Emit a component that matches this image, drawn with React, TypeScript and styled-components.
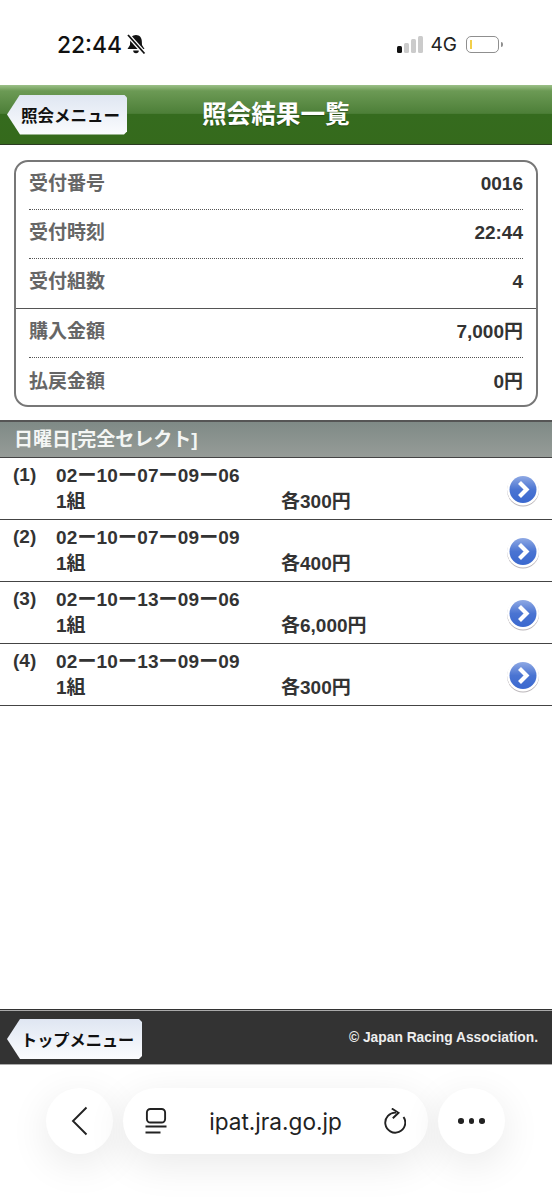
import styled, { createGlobalStyle } from 'styled-components';

const GlobalStyle = createGlobalStyle`
  html, body {
    margin: 0;
    padding: 0;
    background: #fff;
  }
  * {
    box-sizing: border-box;
  }
`;

const summary = [
  { label: '受付番号', value: '0016', height: 48 },
  { label: '受付時刻', value: '22:44', height: 49 },
  { label: '受付組数', value: '4', height: 50, divider: 'solid' },
  { label: '購入金額', value: '7,000円', height: 49 },
  { label: '払戻金額', value: '0円', height: 47, divider: 'none' },
];

const bets = [
  { no: '(1)', numbers: '02ー10ー07ー09ー06', price: '各300円' },
  { no: '(2)', numbers: '02ー10ー07ー09ー09', price: '各400円' },
  { no: '(3)', numbers: '02ー10ー13ー09ー06', price: '各6,000円' },
  { no: '(4)', numbers: '02ー10ー13ー09ー09', price: '各300円' },
];

const ArrowIcon = () => (
  <ArrowSvg viewBox="0 0 34 34">
    <defs>
      <linearGradient id="arrowBlue" x1="0" y1="0" x2="0" y2="1">
        <stop offset="0" stopColor="#8fa9e4" />
        <stop offset="0.5" stopColor="#4a74d2" />
        <stop offset="1" stopColor="#3a68cf" />
      </linearGradient>
    </defs>
    <circle cx="17" cy="17.5" r="16" fill="#b9b4b8" />
    <circle cx="17" cy="16.5" r="16" fill="#fff" />
    <circle cx="17" cy="16.5" r="13.5" fill="url(#arrowBlue)" />
    <path d="M13.5 9.5 L20.5 16.5 L13.5 23.5" fill="none" stroke="#fff" strokeWidth="4.2" />
  </ArrowSvg>
);

const App = () => (
  <Page>
    <GlobalStyle />
    <StatusBar>
      <Clock>
        22:44
        <svg width="20" height="21" viewBox="0 0 20 21">
          <path d="M10 1C6.200 1 4.400 3.800 4.200 7L4 11l-2.500 4h17L16 11l-.2-4C15.600 3.800 13.800 1 10 1z" fill="#111" />
          <path d="M7.200 16.500h5.600a2.800 2.800 0 0 1-5.600 0z" fill="#111" />
          <path d="M2 1 18.500 19.500" stroke="#fff" strokeWidth="4.200" />
          <path d="M2 1 18.500 19.500" stroke="#111" strokeWidth="1.800" />
        </svg>
      </Clock>
      <StatusRight>
        <Signal>
          <SignalBar $height={7} $on />
          <SignalBar $height={10} />
          <SignalBar $height={14} />
          <SignalBar $height={17} />
        </Signal>
        <Network>4G</Network>
        <Battery>
          <BatteryLevel />
        </Battery>
        <BatteryCap />
      </StatusRight>
    </StatusBar>

    <Header>
      <BackButton>照会メニュー</BackButton>
      <Title>照会結果一覧</Title>
    </Header>

    <SummaryCard>
      {summary.map(row => (
        <SummaryRow key={row.label} $divider={row.divider} $height={row.height}>
          <SummaryLabel>{row.label}</SummaryLabel>
          <SummaryValue>{row.value}</SummaryValue>
        </SummaryRow>
      ))}
    </SummaryCard>

    <SectionHeader>日曜日[完全セレクト]</SectionHeader>
    <BetList>
      {bets.map(bet => (
        <BetRow key={bet.no}>
          <BetNo>{bet.no}</BetNo>
          <BetBody>
            <BetNumbers>{bet.numbers}</BetNumbers>
            <BetLine>
              <BetCount>1組</BetCount>
              <span>{bet.price}</span>
            </BetLine>
          </BetBody>
          <ArrowIcon />
        </BetRow>
      ))}
    </BetList>

    <Footer>
      <TopButton>トップメニュー</TopButton>
      <Copyright>© Japan Racing Association.</Copyright>
    </Footer>

    <BrowserBar>
      <RoundButton>
        <svg width="20" height="30" viewBox="0 0 20 30">
          <path d="M16.500 1.500 3 15 16.500 28.500" fill="none" stroke="#222" strokeWidth="1.900" />
        </svg>
      </RoundButton>
      <AddressPill>
        <svg width="22" height="26" viewBox="0 0 22 26">
          <rect x="1.900" y="1" width="18.200" height="13.500" rx="3.500" fill="none" stroke="#222" strokeWidth="1.900" />
          <path d="M.5 18.500h21M.5 24.500h15" fill="none" stroke="#222" strokeWidth="1.900" />
        </svg>
        <Url>ipat.jra.go.jp</Url>
        <svg width="22" height="26" viewBox="0 0 22 26">
          <path d="M12 4.700A10 10 0 1 0 19.500 9" fill="none" stroke="#222" strokeWidth="1.900" />
          <path d="M7.800.5 14.500 4.800 8.800 10.200" fill="none" stroke="#222" strokeWidth="1.900" />
        </svg>
      </AddressPill>
      <RoundButton>
        <Dots>
          <i />
          <i />
          <i />
        </Dots>
      </RoundButton>
    </BrowserBar>
  </Page>
);

const jpFont = `"Liberation Sans", "Noto Sans CJK JP", sans-serif`;

const Page = styled.div`
  width: 552px;
  height: 1200px;
  display: flex;
  flex-direction: column;
  overflow: hidden;
  background: #fff;
  font-family: ${jpFont};
`;

const StatusBar = styled.div`
  height: 85px;
  flex: none;
  padding: 3px 49px 0 57px;
  display: flex;
  align-items: center;
  justify-content: space-between;
`;

const Clock = styled.div`
  display: flex;
  align-items: center;
  gap: 4px;
  font-size: 22.800px;
  font-weight: 500;
  color: #111;
  font-family: Inter, sans-serif;
`;

const StatusRight = styled.div`
  display: flex;
  align-items: center;
`;

const Signal = styled.div`
  display: flex;
  align-items: flex-end;
  gap: 2px;
  height: 17px;
  margin-right: 8px;
`;

const SignalBar = styled.span<{ $height: number; $on?: boolean }>`
  width: 5px;
  height: ${props => props.$height}px;
  border-radius: 1.500px;
  background: ${props => (props.$on ? '#111' : '#cbcbcb')};
`;

const Network = styled.span`
  font-family: Inter, sans-serif;
  font-size: 19px;
  color: #222;
  margin-right: 9px;
`;

const Battery = styled.div`
  width: 33px;
  height: 17px;
  border: 1px solid #8f8f8f;
  border-radius: 5px;
  padding: 3px;
`;

const BatteryLevel = styled.div`
  width: 2px;
  height: 100%;
  background: #f2cf4a;
`;

const BatteryCap = styled.span`
  width: 2px;
  height: 5px;
  margin-left: 2px;
  background: #8f8f8f;
  border-radius: 0 2px 2px 0;
`;

const Header = styled.header`
  height: 60px;
  flex: none;
  display: flex;
  align-items: center;
  padding-left: 7px;
  background: linear-gradient(#9cc088 0, #6c9a55 10%, #4d7f38 48%, #356b1e 50%, #356a1c 100%);
  border-bottom: 1px solid #2b3a22;
`;

const BackButton = styled.div`
  width: 120px;
  height: 40px;
  padding-left: 14px;
  display: flex;
  align-items: center;
  font-size: 16.500px;
  font-weight: 700;
  color: #111;
  background: linear-gradient(#dfe6f2, #fbfcfe);
  clip-path: polygon(
    13px 0,
    calc(100% - 3px) 0,
    100% 3px,
    100% calc(100% - 3px),
    calc(100% - 3px) 100%,
    13px 100%,
    0 50%
  );
  white-space: nowrap;
`;

const Title = styled.h1`
  margin: 0 0 0 75px;
  font-size: 24.600px;
  line-height: 30px;
  font-weight: 700;
  color: #fff;
  text-shadow: 0 1px 1px rgba(0, 0, 0, 0.3);
`;

const SummaryCard = styled.section`
  margin: 15px 14px 0;
  height: 247px;
  flex: none;
  border: 2px solid #777;
  border-radius: 14px;
  display: flex;
  flex-direction: column;
`;

const SummaryRow = styled.div<{ $divider?: string; $height: number }>`
  height: ${props => props.$height}px;
  flex: none;
  margin: 0 ${props => (props.$divider === 'solid' ? 0 : 13)}px;
  padding: 0 ${props => (props.$divider === 'solid' ? 13 : 0)}px
    ${props => (props.$divider === 'none' ? 0 : 3)}px;
  display: flex;
  align-items: center;
  justify-content: space-between;
  line-height: 22px;
  border-bottom: ${props =>
    props.$divider === 'none'
      ? 'none'
      : props.$divider === 'solid'
        ? '1px solid #555'
        : '1px dotted #555'};
`;

const SummaryLabel = styled.span`
  font-size: 19px;
  font-weight: 700;
  color: #666;
`;

const SummaryValue = styled.span`
  font-size: 19px;
  font-weight: 700;
  color: #333;
`;

const SectionHeader = styled.h2`
  margin: 13px 0 0;
  height: 38px;
  flex: none;
  padding: 0 0 4px 14px;
  display: flex;
  align-items: center;
  font-size: 19px;
  font-weight: 700;
  color: #f4f6f4;
  background: linear-gradient(#7f8a86, #969c98);
  border-top: 2px solid #555;
  border-bottom: 1px solid #444;
`;

const BetList = styled.div`
  flex: 1;
`;

const BetRow = styled.div`
  height: 62px;
  padding: 4px 12px 0 13px;
  display: flex;
  align-items: flex-start;
  border-bottom: 1px solid #444;
  color: #333;
  font-size: 19px;
  font-weight: 700;
  line-height: 26px;
`;

const BetNo = styled.div`
  width: 43px;
  line-height: 26px;
  flex: none;
`;

const BetBody = styled.div`
  flex: 1;
  margin-top: 1px;
`;

const BetNumbers = styled.div`
  letter-spacing: 0.15px;
`;

const BetLine = styled.div`
  display: flex;
`;

const BetCount = styled.span`
  width: 225px;
`;

const ArrowSvg = styled.svg`
  width: 34px;
  height: 34px;
  flex: none;
  margin-top: 11px;
`;

const Footer = styled.footer`
  height: 56px;
  flex: none;
  padding: 0 14px 0 7px;
  display: flex;
  align-items: center;
  justify-content: space-between;
  background: #333;
  border-top: 1px solid #333;
  border-bottom: 1px solid #aaa;
  box-shadow: inset 0 1px 0 #aaa;
`;

const TopButton = styled(BackButton)`
  width: 135px;
  margin-top: 4px;
  font-size: 16.200px;
`;

const Copyright = styled.span`
  font-size: 13.800px;
  font-weight: 700;
  color: #eee;
`;

const BrowserBar = styled.div`
  height: 135px;
  flex: none;
  padding: 23px 47px 0 46px;
  display: flex;
  align-items: flex-start;
  gap: 10px;
`;

const RoundButton = styled.div`
  width: 67px;
  height: 66px;
  flex: none;
  border-radius: 50%;
  display: flex;
  align-items: center;
  justify-content: center;
  background: #fff;
  box-shadow: 0 10px 40px rgba(0, 0, 0, 0.09);
`;

const AddressPill = styled.div`
  flex: 1;
  height: 66px;
  padding: 0 22px;
  display: flex;
  align-items: center;
  justify-content: space-between;
  border-radius: 33px;
  background: #fff;
  box-shadow: 0 10px 40px rgba(0, 0, 0, 0.09);
`;

const Url = styled.span`
  font-family: Inter, sans-serif;
  font-size: 22.600px;
  color: #222;
`;

const Dots = styled.div`
  display: flex;
  gap: 5px;
  i {
    width: 5.500px;
    height: 5.500px;
    border-radius: 50%;
    background: #222;
  }
`;

export default App;
